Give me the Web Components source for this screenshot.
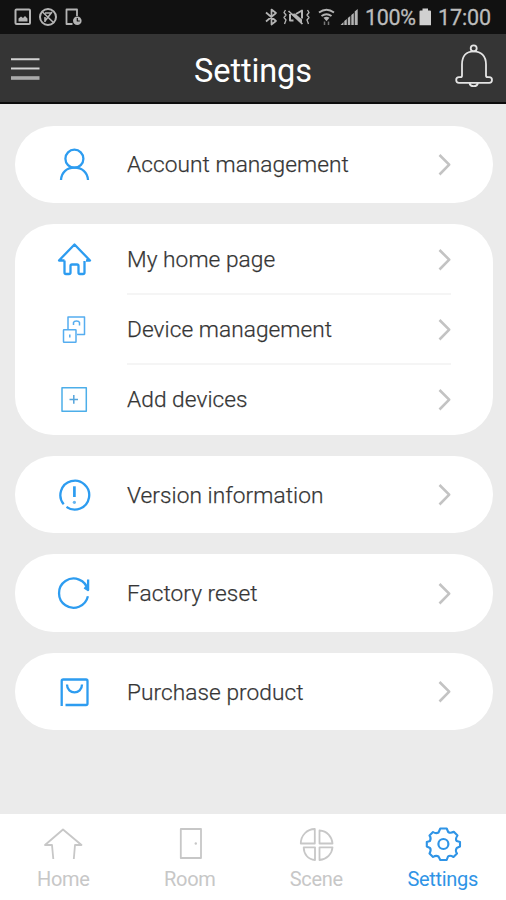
<!DOCTYPE html>
<html lang="en">
<head>
<meta charset="utf-8">
<title>Settings</title>
<style>
html,body{margin:0;padding:0;height:900px;overflow:hidden;background:#ebebeb;font-family:Roboto,"Liberation Sans",sans-serif}
</style>
</head>
<body>
<settings-screen></settings-screen>
<script>
// Each icon: [viewBox, markup]
const ICONS = {
  statusLeft: ['12 6 74 24', `<g fill="none" stroke="#b4b4b4" stroke-width="2"><rect x="15.500" y="9.500" width="14.500" height="14.500" rx="1"/><circle cx="48" cy="17" r="8"/><path d="M42 11.500l12 11.500M45 22v-5M45 13h6M52 12l-7 9" stroke-width="1.600"/><path d="M72.500 24H66.500V9.500h10.500V16" stroke-width="1.800"/></g><path d="M18.500 21.500v-3l2.500-2 2 1.500 2-2 2.500 2.500v3z" fill="#b4b4b4" stroke="none"/><circle cx="77.300" cy="20.800" r="4.300" fill="#b4b4b4" stroke="none"/><path d="M77.300 18v3h2.500" stroke="#111" stroke-width="1.200" fill="none"/>`],
  statusRight: ['264 6 96 24', `<g fill="none" stroke="#b4b4b4" stroke-width="1.700"><path d="M266 12.500l10 8.500-4.500 3.500V9.500L276 13l-10 8.500"/><path d="M285.500 10l-1.500 2.500 2 2.500-2 2.500 2 2.500-1.500 4M307.500 10l1.500 2.500-2 2.500 2 2.500-2 2.500 1.500 4" stroke-width="1.300"/><path d="M288.500 11l14 13"/><path d="M290 14v6.500h3.500M296 14l6-3.500v8" stroke-width="2"/></g><path d="M291 14l11 10.500v-5l-7-6z" fill="#b4b4b4" stroke="none"/><g fill="none" stroke="#b4b4b4" stroke-width="1.900"><path d="M319 12.500q7.500-5.500 15 0M321.500 16q5-3.500 10 0"/></g><path d="M323.500 17.800q3-2 6 0l-3 3.500z" fill="#b4b4b4" stroke="none"/><path d="M324.500 21.500v3.500M328.500 21.500v3.500" stroke="#777" stroke-width="1.500"/><path d="M340.500 25l3-3v3zM344.300 25v-4l2.500-2v6zM347.800 25v-7l2.500-2v9zM351.300 25V15l2.500-2v12zM354.700 25V11.500l3-2.500v16z" fill="#b4b4b4" stroke="none"/>`],
  battery: ['418 6 16 22', `<path d="M419.500 11.500q0-1 1-1h2V8.500h5.500v2h2q1 0 1 1V25.300h-11.500z" fill="#d0d0d0" stroke="none"/>`],
  menu: ['8 54 36 30', `<path d="M11 59.300h28.500M11 68.500h28.500" stroke="#d2d2d2" style="stroke-width:1.900"/><path d="M11 78h28.500" stroke="#aaa" style="stroke-width:3.600"/>`],
  bell: ['452 40 44 50', `<g fill="none" stroke="#e4e4e4" stroke-width="1.800"><circle cx="473.700" cy="48.300" r="3"/><path d="M462 75.500V64.500C462 56 466.500 51.300 473.700 51.300S486 56 486 64.500V75.500q0 1.700 1.700 1.700h1.500a2.800 2.800 0 0 1 0 5.600H459a2.800 2.800 0 0 1 0-5.600h1.500q1.500 0 1.500-1.700zM469.500 83q.5 3.200 4.200 3.200t4.200-3.200"/></g>`],
  user: ['54 144 42 42', `<circle cx="74.400" cy="158.700" r="9"/><path d="M61 180C61.500 172 67 167.700 74.400 167.700S87.500 172 88 180"/>`],
  house: ['54 239 42 42', `<path d="M64.500 260.500H59L74.500 244.500 90 260.500H86M64.500 260.500V272.500q0 1.500 1.500 1.500h3q1.500 0 1.500-1.500V266q0-1.500 1.500-1.500h5q1.500 0 1.500 1.500v6.500q0 1.500 1.500 1.500h3q1.500 0 1.500-1.500V261"/>`],
  device: ['54 309 42 42', `<g stroke-width="1.500" stroke="#55adf0"><path d="M68 329.500V317H84.500V334.500H77"/><rect x="63.500" y="329.800" width="12.500" height="12.500" rx=".5"/><path d="M73.500 325v-2.500q.5-1.500 3-1.500t3 1.500v3M69.800 334.500v3"/></g>`],
  add: ['54 379 42 42', `<g stroke="#4caee9" stroke-width="1.500"><rect x="62" y="387.700" width="24.300" height="23.600"/><path d="M69.500 399.400h8.500M73.800 395v8.800" stroke="#55a5dc"/></g>`],
  info: ['54 474 42 42', `<path d="M63.700 504.300A14.400 14.400 0 1 1 66.500 506.900"/><path d="M74.400 486.300v10.700" stroke-width="2.700"/><circle cx="74.400" cy="502.300" r="1.600" fill="#66b5f1" stroke="none"/>`],
  reset: ['54 573 42 42', `<path d="M87.900 596.300A14.600 14.600 0 1 1 87.900 590M88.100 579.500V590L84.300 587.500"/>`],
  bag: ['54 671 42 42', `<path d="M61.700 706V681q0-1.500 1.500-1.500H86q1.500 0 1.500 1.500V703.500q0 1.500-1.500 1.500H65.500M67 684.500C67 695 82 695 82 684.500"/>`],
  chevron: ['434 149 20 32', `<path d="M439.500 155l9.700 9.700-9.700 9.800" stroke="#c3c3c3" style="stroke-width:2.600"/>`],
  navHome: ['42 824 44 38', `<path d="M54.300 859L53 845H46L64 829.500 82.500 845H76L74.800 859"/>`],
  navRoom: ['168 824 44 38', `<path d="M180.800 829H201V858H180.800z"/><circle cx="195.800" cy="843.500" r="1.200" fill="#c7c7c7" stroke="none"/>`],
  navScene: ['295 824 44 38', `<path d="M315.800 829V843.500H301.800C301.800 835.500 308 829 315.800 829zM320.500 830.500V843.500H333.500C333 836.500 328 831 320.500 830.500zM316 847.300V860C309 859.500 304.700 854 304.700 847.300zM320.500 847.300V860C328 859 333 854 333.500 847.300z"/>`],
  navSettings: ['421 824 44 38', `<path d="M440.300 828.500H446.700L448.200 832Q450.500 833.500 453.800 831.800L457.500 835.500Q455 839 456.700 841L460 842V846.500L456.700 848Q455 850.500 457 853.500L453.500 857Q450 854.800 448 856.500L446.700 860H440.300L438.500 856.500Q436 855 433 857L429.500 853.500Q431.500 850 430 848L426.800 846.500V842L430 841Q431.500 838 429.500 835.500L433 832Q436 834 438.500 832.500z" stroke-width="2.100"/><circle cx="443.400" cy="844" r="5" stroke-width="2.200"/>`]
};

class UiIcon extends HTMLElement {
  connectedCallback() {
    const [box, art] = ICONS[this.getAttribute('name')];
    const [, , w, h] = box.split(' ');
    this.attachShadow({mode: 'open'}).innerHTML =
      `<style>:host{display:block;flex:none;width:${w}px;height:${h}px}svg{display:block}</style>
       <svg width="${w}" height="${h}" viewBox="${box}" fill="none" stroke="currentColor" stroke-linejoin="round" style="stroke-width:var(--icon-stroke,2.300)">${art}</svg>`;
  }
}

const define = (name, html) => customElements.define(name, class extends HTMLElement {
  connectedCallback() { this.attachShadow({mode: 'open'}).innerHTML = html(this); }
});

define('status-bar', () => `<style>
  :host{display:flex;align-items:flex-start;height:34px;box-sizing:border-box;padding:6px 0 0 12px;background:#111;color:#bcbcbc;font-size:21.500px;line-height:24px}
  .right{display:flex;margin-left:178px}
  .pct{width:49px;margin:0 4px 0 5px;letter-spacing:-.3px}
  .time{margin-left:4px;letter-spacing:-.1px}
  .pct,.time{-webkit-text-stroke:.3px #bcbcbc}
  </style><ui-icon name="statusLeft"></ui-icon>
  <div class="right"><ui-icon name="statusRight"></ui-icon><span class="pct">100%</span><ui-icon name="battery"></ui-icon><span class="time">17:00</span></div>`);

define('title-bar', () => `<style>
  :host{display:flex;align-items:flex-start;justify-content:space-between;height:70px;box-sizing:border-box;padding:0 10px 0 8px;background:#353535;border-bottom:2px solid #0c0c0c;color:#fff}
  .menu{margin-top:20px;width:46px}.bell{margin-top:6px}
  h1{margin:19px 0 0;font:400 32.500px/36px Roboto,sans-serif;letter-spacing:-.1px}
  </style><ui-icon class="menu" name="menu"></ui-icon><h1><slot></slot></h1><ui-icon class="bell" name="bell"></ui-icon>`);

define('settings-card', () => `<style>
  :host{display:block;background:#fff;border-radius:38.500px;padding:var(--pad,3.700px) 0;margin-bottom:21.200px}
  </style><slot></slot>`);

define('settings-row', el => `<style>
  :host{display:flex;align-items:center;height:70px;padding:0 39px;color:#303030}
  .icon{color:#2d9cf0;margin:1px 31px 0 0}
  .label{flex:1;min-width:0;height:70px;line-height:72px;font-size:22.700px;font-weight:300;letter-spacing:.05px;-webkit-text-stroke:.25px #444;white-space:nowrap}
  .chev{margin-top:1px}
  :host([divided]) .label::after{content:"";display:block;width:324px;height:2px;margin-top:-3px;background:#f5f5f5}
  </style><ui-icon class="icon" name="${el.getAttribute('icon')}"></ui-icon><span class="label"><slot></slot></span><ui-icon class="chev" name="chevron"></ui-icon>`);

define('nav-item', el => `<style>
  :host{display:flex;flex-direction:column;align-items:center;width:126.600px;padding-top:10px;color:#c7c7c7;--icon-stroke:1.800}
  :host([active]){color:#2f94e6;--icon-stroke:2}
  span{margin-top:5px;font-size:20px;line-height:25px;letter-spacing:-.3px}
  </style><ui-icon name="${el.getAttribute('icon')}"></ui-icon><span><slot></slot></span>`);

define('nav-bar', () => `<style>
  :host{display:flex;height:86px;background:#fff;flex:none}
  </style><slot></slot>`);

define('settings-screen', () => `<style>
  :host{display:flex;flex-direction:column;width:506px;height:900px;background:#ebebeb}
  main{flex:1;padding:21.500px 13.500px 0 15px}
  </style>
  <status-bar></status-bar><title-bar>Settings</title-bar>
  <main>
    <settings-card><settings-row icon="user">Account management</settings-row></settings-card>
    <settings-card style="--pad:.3px">
      <settings-row icon="house" divided>My home page</settings-row>
      <settings-row icon="device" divided>Device management</settings-row>
      <settings-row icon="add">Add devices</settings-row>
    </settings-card>
    <settings-card><settings-row icon="info">Version information</settings-row></settings-card>
    <settings-card><settings-row icon="reset">Factory reset</settings-row></settings-card>
    <settings-card><settings-row icon="bag">Purchase product</settings-row></settings-card>
  </main>
  <nav-bar>
    <nav-item icon="navHome">Home</nav-item><nav-item icon="navRoom">Room</nav-item>
    <nav-item icon="navScene">Scene</nav-item><nav-item icon="navSettings" active>Settings</nav-item>
  </nav-bar>`);

customElements.define('ui-icon', UiIcon);
</script>
</body>
</html>
